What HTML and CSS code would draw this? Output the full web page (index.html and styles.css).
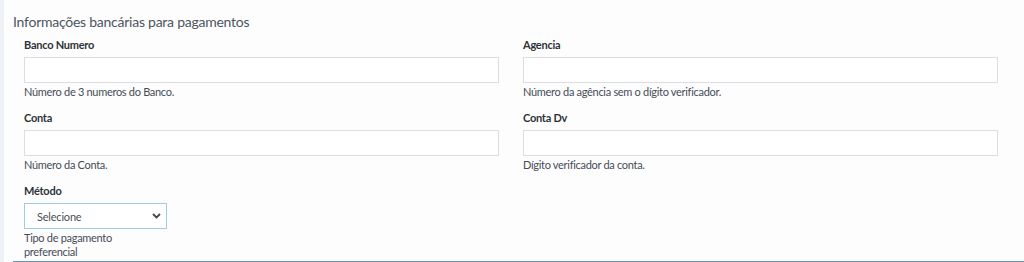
FILE: index.html
```html
<!DOCTYPE html>
<html lang="pt-BR">
<head>
<meta charset="utf-8">
<title>Informações bancárias</title>
<link rel="stylesheet" href="styles.css">
</head>
<body>
<div class="page">
  <section class="section">
    <h2 class="title">Informações bancárias para pagamentos</h2>
    <div class="fields">
      <div class="row">
        <div class="field">
          <label class="label">Banco Numero</label>
          <input class="input" type="text">
          <div class="help">Número de 3 numeros do Banco.</div>
        </div>
        <div class="field">
          <label class="label">Agencia</label>
          <input class="input" type="text">
          <div class="help">Número da agência sem o dígito verificador.</div>
        </div>
      </div>
      <div class="row">
        <div class="field">
          <label class="label">Conta</label>
          <input class="input" type="text">
          <div class="help">Número da Conta.</div>
        </div>
        <div class="field">
          <label class="label">Conta Dv</label>
          <input class="input" type="text">
          <div class="help">Dígito verificador da conta.</div>
        </div>
      </div>
      <div class="row last">
        <div class="field small">
          <label class="label">Método</label>
          <div class="select">
            <span>Selecione</span>
            <svg class="chev" width="9" height="6" viewBox="0 0 9 6"><path d="M1 1l3.5 3.5L8 1" fill="none" stroke="#444" stroke-width="1.8"/></svg>
          </div>
          <div class="help">Tipo de pagamento preferencial</div>
        </div>
      </div>
    </div>
    <div class="bottom-line"></div>
  </section>
</div>
</body>
</html>
```

FILE: styles.css
```css
* { box-sizing: border-box; }
html, body { margin: 0; padding: 0; }
body {
  background: #fff;
  font-family: "Lato", "Open Sans", sans-serif;
  color: #3f4752;
  height: 262px;
  overflow: hidden;
}
.page {
  border-left: 4px solid #eef1f5;
  min-height: 262px;
  background: #fdfdfe;
}
.section {
  padding: 12px 0 0 9px;
}
.title {
  margin: 0;
  font-size: 14px;
  font-weight: 400;
  line-height: 20px;
  letter-spacing: -0.25px;
  color: #4c5561;
}
.fields {
  padding: 2px 26px 0 11px;
}
.row {
  display: flex;
  gap: 24px;
  margin-bottom: 8px;
}
.row.last { margin-bottom: 0; }
.field {
  flex: 1 1 0;
  display: flex;
  flex-direction: column;
}
.field.small {
  flex: 0 0 143px;
}
.label {
  font-size: 11px;
  font-weight: 700;
  line-height: 14px;
  letter-spacing: -0.25px;
  color: #2f3338;
  margin: 4px 0 5px;
}
.input {
  height: 26px;
  border: 1px solid #dcdde4;
  background: #fff;
  border-radius: 0;
  margin: 0;
  padding: 0 8px;
}
.help {
  font-size: 11px;
  line-height: 14px;
  letter-spacing: -0.3px;
  color: #454c56;
  margin-top: 2px;
}
.select {
  height: 26px;
  border: 1px solid #9fcbe9;
  background: #fff;
  display: flex;
  align-items: center;
  justify-content: space-between;
  padding: 0 5px 0 12px;
  font-size: 11px;
  letter-spacing: -0.2px;
  color: #4a4f57;
}
.chev { display: block; }
.bottom-line {
  height: 2px;
  background: #6893b6;
  margin-top: 2px;
}
```
